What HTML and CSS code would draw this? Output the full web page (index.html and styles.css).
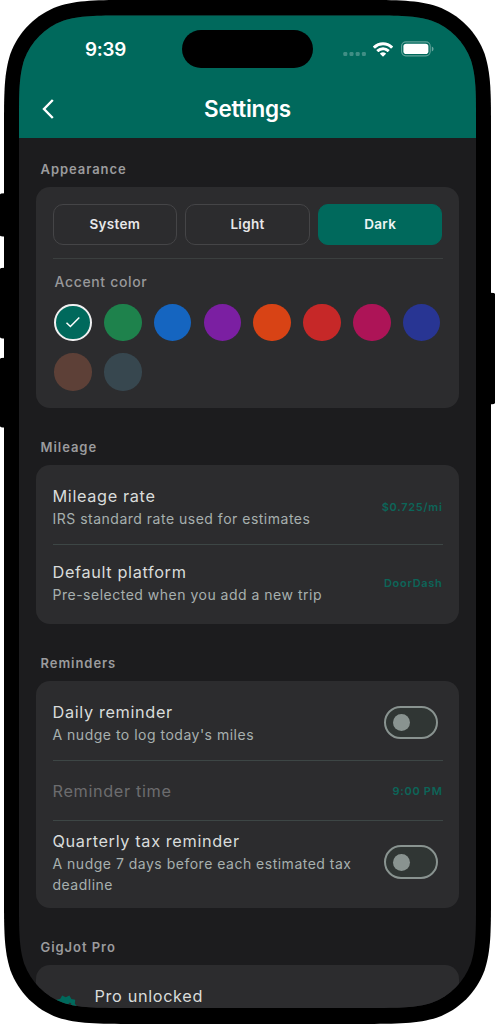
FILE: index.html
```html
<!DOCTYPE html>
<html lang="en">
<head>
<meta charset="utf-8">
<title>Settings</title>
<link rel="stylesheet" href="styles.css">
</head>
<body>
<div class="device">
  <svg class="frame" width="495" height="1024" viewBox="0 0 495 1024">
    <path d="M0 194.500Q0 193.300 5 193.300V236.500Q0 236.500 0 235.500ZM0 269Q0 267.700 5 267.700V338.500Q0 338.500 0 337ZM0 359Q0 357.700 5 357.700V427.500Q0 427.500 0 426ZM495 294Q495 292.700 490 292.700V404.300Q495 404.300 495 403Z"/>
    <path d="M134 0H361C398.500 0 417.200 0 437.300 6.400C459.300 14.400 476.600 31.700 484.600 53.700C491 73.800 491 92.500 491 130V894C491 931.500 491 950.200 484.600 970.300C476.600 992.300 459.300 1009.600 437.300 1017.600C417.200 1024 398.500 1024 361 1024H134C96.500 1024 77.800 1024 57.700 1017.600C35.700 1009.600 18.400 992.300 10.400 970.300C4 950.200 4 931.500 4 894V130C4 92.500 4 73.800 10.400 53.700C18.400 31.700 35.700 14.400 57.700 6.400C77.800 0 96.500 0 134 0Z"/>
  </svg>
  <main class="screen">
    <header class="header">
      <div class="status">
        <span class="clock">9:39</span>
        <span class="island"></span>
        <span class="indicators">
          <svg width="24" height="6" viewBox="0 0 24 6" fill="#fff" fill-opacity=".25"><rect x="0.300" y="1" width="4" height="4" rx="1.200"/><rect x="6.500" y="1" width="4" height="4" rx="1.200"/><rect x="12.700" y="1" width="4" height="4" rx="1.200"/><rect x="18.900" y="1" width="4" height="4" rx="1.200"/></svg>
          <svg class="wifi" width="20" height="15" viewBox="0 0 17 12.300" fill="#fff"><path d="M8.500 2.590c2.470 0 4.840.95 6.620 2.650.13.130.35.130.49 0l1.280-1.290a.35.35 0 0 0 0-.5 12.080 12.080 0 0 0-16.780 0 .35.35 0 0 0 0 .5L1.390 5.240c.14.130.35.130.49 0A9.600 9.600 0 0 1 8.500 2.590Zm0 4.210c1.360 0 2.670.5 3.670 1.410.14.140.35.130.49 0l1.280-1.300a.36.36 0 0 0 0-.52 7.920 7.920 0 0 0-10.870 0 .36.36 0 0 0 0 .52l1.270 1.300c.14.130.36.140.49 0A5.470 5.470 0 0 1 8.500 6.800Zm2.490 2.840a.35.35 0 0 1-.1.260l-2.140 2.170a.35.35 0 0 1-.5 0L6.110 9.900a.35.35 0 0 1 .01-.52 3.770 3.770 0 0 1 4.760 0c.07.070.11.160.11.260Z"/></svg>
          <svg class="battery" width="33" height="16" viewBox="0 0 33 16"><rect x=".6" y=".9" width="28.600" height="14" rx="4.300" fill="none" stroke="#fff" stroke-opacity=".38" stroke-width="1.100"/><rect x="2.400" y="2.700" width="25" height="10.400" rx="2.800" fill="#fff"/><path d="M30.800 5.600c1.200.4 1.700 1.300 1.700 2.400s-.5 2-1.700 2.400Z" fill="#fff" fill-opacity=".42"/></svg>
        </span>
      </div>
      <div class="navbar">
        <svg class="back" width="16" height="24" viewBox="0 0 16 24"><path d="M12.800 3 4 12 12.800 21" fill="none" stroke="#fff" stroke-width="2.400"/></svg>
        <h1 class="title">Settings</h1>
      </div>
    </header>

    <section class="group">
      <h2 class="heading">Appearance</h2>
      <div class="card appearance">
        <div class="modes">
          <button class="mode">System</button>
          <button class="mode">Light</button>
          <button class="mode selected">Dark</button>
        </div>
        <div class="accent-label">Accent color</div>
        <div class="swatches">
          <span class="swatch teal"><svg width="18" height="18" viewBox="0 0 18 18"><path d="M2.500 9.800 6.400 13.500 15.300 4.500" fill="none" stroke="#fff" stroke-width="1.500"/></svg></span>
          <span class="swatch green"></span>
          <span class="swatch blue"></span>
          <span class="swatch purple"></span>
          <span class="swatch orange"></span>
          <span class="swatch red"></span>
          <span class="swatch pink"></span>
          <span class="swatch indigo"></span>
          <span class="swatch brown"></span>
          <span class="swatch slate"></span>
        </div>
      </div>
    </section>

    <section class="group">
      <h2 class="heading">Mileage</h2>
      <div class="card">
        <div class="row rate">
          <div class="copy"><div class="name">Mileage rate</div><div class="hint">IRS standard rate used for estimates</div></div>
          <span class="value">$0.725/mi</span>
        </div>
        <div class="row platform">
          <div class="copy"><div class="name">Default platform</div><div class="hint">Pre-selected when you add a new trip</div></div>
          <span class="value">DoorDash</span>
        </div>
      </div>
    </section>

    <section class="group">
      <h2 class="heading">Reminders</h2>
      <div class="card">
        <div class="row daily">
          <div class="copy"><div class="name">Daily reminder</div><div class="hint">A nudge to log today's miles</div></div>
          <span class="switch"></span>
        </div>
        <div class="row time">
          <div class="name disabled">Reminder time</div>
          <span class="value">9:00 PM</span>
        </div>
        <div class="row quarterly">
          <div class="copy"><div class="name">Quarterly tax reminder</div><div class="hint">A nudge 7 days before each estimated tax<br>deadline</div></div>
          <span class="switch"></span>
        </div>
      </div>
    </section>

    <section class="group">
      <h2 class="heading">GigJot Pro</h2>
      <div class="card pro">
        <svg class="badge" width="25.500" height="25.500" viewBox="0 0 24 24"><path fill="#00695c" d="M23 12l-2.440-2.790.34-3.690-3.610-.82-1.890-3.200L12 2.960 8.600 1.500 6.710 4.690 3.100 5.500l.34 3.700L1 12l2.440 2.790-.34 3.700 3.610.82L8.600 22.500l3.400-1.470 3.400 1.460 1.890-3.190 3.610-.82-.34-3.690L23 12zm-12.910 4.720l-3.800-3.810 1.480-1.480 2.320 2.330 5.850-5.870 1.480 1.480-7.330 7.350z"/></svg>
        <div class="name">Pro unlocked</div>
      </div>
    </section>
  </main>
</div>
</body>
</html>
```
FILE: styles.css
```css
* { box-sizing: border-box; }

body {
  margin: 0;
  background: #fff;
  font-family: Inter, "Liberation Sans", sans-serif;
}

.device {
  position: relative;
  width: 495px;
  height: 1024px;
  padding: 15px 19px;
  overflow: hidden;
}

.frame {
  position: absolute;
  inset: 0;
}

/* Continuous-curvature corners of the display */
.screen {
  position: relative;
  width: 457px;
  height: 993px;
  overflow: hidden;
  background: #1c1c1e;
  clip-path: path("M107 .5H350C380.800 .5 396.200 .5 412.800 5.700C430.900 12.300 445.200 26.600 451.800 44.700C457 61.300 457 76.700 457 107.500V886C457 916.800 457 932.200 451.800 948.800C445.200 966.900 430.900 981.200 412.800 987.800C396.200 993 380.800 993 350 993H107C76.200 993 60.800 993 44.200 987.800C26.100 981.200 11.800 966.900 5.200 948.800C0 932.200 0 916.800 0 886V107.500C0 76.700 0 61.300 5.200 44.700C11.800 26.600 26.100 12.300 44.200 5.700C60.800 .5 76.200 .5 107 .5Z");
}

.header {
  height: 123px;
  background: #00695c;
  color: #fff;
}

.status {
  display: grid;
  grid-template-columns: 163px 131px 1fr;
  align-items: center;
  height: 68px;
}

.clock {
  padding-left: 66px;
  font-size: 18.8px;
  font-weight: 600;
  letter-spacing: -0.25px;
}

.island {
  height: 38px;
  border-radius: 19px;
  background: #000;
}

.indicators {
  display: flex;
  align-items: center;
  padding-left: 30px;
}

.indicators svg:first-child { margin-top: 10px; }
.wifi { margin-left: 6px; }
.battery { margin-left: 8px; }

.navbar {
  display: grid;
  grid-template-columns: 48px 1fr 48px;
  align-items: center;
  height: 52px;
}

.back { margin-left: 21px; }

.title {
  margin: 0;
  text-align: center;
  font-size: 22.500px;
  line-height: 28px;
  font-weight: 600;
  letter-spacing: -0.3px;
}

.group { padding: 20px 17px 0; }

.group + .group { padding-top: 28px; }

.heading {
  height: 29px;
  margin: 0;
  padding-left: 4.500px;
  font-size: 13px;
  line-height: 22px;
  font-weight: 600;
  letter-spacing: 0.95px;
  color: #9b9b9d;
}

.card {
  padding: 0 16.500px;
  border-radius: 14px;
  background: #2c2c2e;
}

.appearance {
  height: 221px;
  padding-top: 16.500px;
}

.modes {
  display: grid;
  grid-template-columns: repeat(3, 1fr);
  gap: 8px;
  padding-bottom: 12.500px;
  border-bottom: 1.500px solid #3b3f3f;
}

.mode {
  height: 41.500px;
  padding: 0;
  border: 1px solid #454547;
  border-radius: 10px;
  background: none;
  font: 600 13.500px/20px Inter, sans-serif;
  letter-spacing: 0.3px;
  color: #e8e8e9;
}

.mode.selected {
  border-color: #00695c;
  background: #00695c;
  color: #eef5f4;
}

.accent-label {
  padding: 12px 0 0 2px;
  font-size: 14px;
  line-height: 22px;
  font-weight: 500;
  letter-spacing: 0.65px;
  color: #98989a;
}

.swatches {
  display: grid;
  grid-template-columns: repeat(8, 37.500px);
  gap: 12.300px;
  padding: 11px 0 0 1.800px;
}

.swatch {
  display: flex;
  align-items: center;
  justify-content: center;
  height: 37.500px;
  border-radius: 50%;
}

.teal { background: #00695c; border: 2.300px solid #f0f0f1; }
.green { background: #1e824c; }
.blue { background: #1565c0; }
.purple { background: #7b1fa2; }
.orange { background: #d84315; }
.red { background: #c62828; }
.pink { background: #ad1457; }
.indigo { background: #283593; }
.brown { background: #5d4037; }
.slate { background: #37474f; }

.row {
  display: flex;
  align-items: center;
  justify-content: space-between;
}

.row + .row { border-top: 1px solid #3d4645; }

.rate { height: 79px; padding: 19px 0 15px; }
.platform { height: 80px; padding: 15px 0 19px; }
.daily { height: 79px; padding: 19px 0 15px; }
.time { height: 60px; }
.quarterly { height: 88px; padding: 8px 0 13px; }

.name {
  font-size: 16.300px;
  line-height: 24px;
  letter-spacing: 0.64px;
  color: #d9dcdb;
}

.name.disabled { color: #6c6c6e; }

.hint {
  font-size: 14px;
  line-height: 21px;
  letter-spacing: 0.5px;
  white-space: nowrap;
  color: #a7b0ae;
}

.value {
  font-size: 11px;
  line-height: 16px;
  font-weight: 600;
  letter-spacing: 0.7px;
  color: #0c6559;
}

.switch {
  display: flex;
  align-items: center;
  width: 54px;
  height: 33.500px;
  margin-right: 4.500px;
  padding-left: 6.500px;
  border: 2px solid #899390;
  border-radius: 17px;
  background: #303634;
}

.switch::before {
  content: "";
  width: 17px;
  height: 17px;
  border-radius: 50%;
  background: #899390;
}

.pro {
  display: flex;
  gap: 16.500px;
  height: 80px;
  padding-top: 18.500px;
}

.badge { margin-top: 10.500px; }
```
